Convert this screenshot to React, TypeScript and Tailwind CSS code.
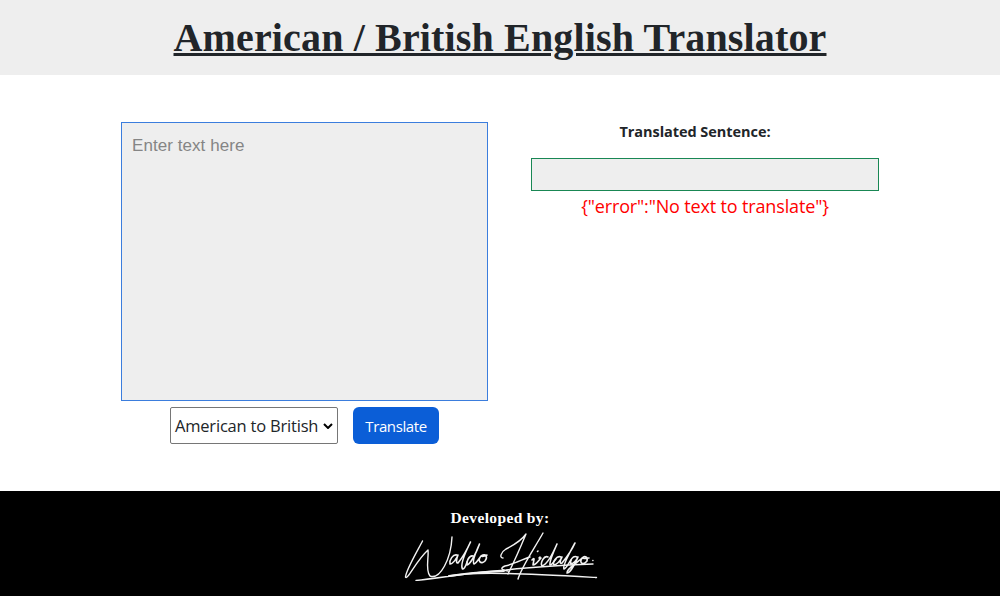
import React from "react";

function Signature() {
  return (
    <svg
      className="block h-[50px] w-[196px]"
      viewBox="402 531 196 50"
      fill="none"
      stroke="#f2f2f2"
      strokeWidth="1.4"
      strokeLinecap="round"
      strokeLinejoin="round"
      role="img"
      aria-label="Waldo Hidalgo"
    >
      <path d="M422.500 541 C418 550 406 570 405.500 577 C407 581 416 561 428 550 C429 557 425 570 430 576 C440 580 451 559 452 537" />
      <path strokeWidth="1.6" d="M457 555 C453 554 449 560 450 564 C453 564 457 558 458 555 C456 560 456 563 458 563 C462 558 467 550 470.500 542 C466 551 460 565 462.500 569 C465 569 466 565 467 562" />
      <path strokeWidth="1.6" d="M473 556 C469 555 466 562 467 565 C471 564 477 551 479.500 544 C475 554 472 562 474 564 C477 563 479 558 481 556 C486 553 488 557 485 561 C481 565 477 561 481 556 C483 557 485 556 487 555" />
      <path d="M503 558 C499 558 501 552 506 549 C514 545 521 541 526 534 C521 546 514 562 508 574 M543 533 C534 549 522 566 518 579 M508 571 C501 570 500 568 505 566 C515 564 525 558 530 557" />
      <path strokeWidth="1.6" d="M540 557 L539 558 M532 560 C536 556 533 562 533 565 C536 565 539 560 541 558 M537.500 551.500 L538 551 M548 557 C544 555 540 563 542 566 C548 564 554 551 557 544 C553 553 549 562 550 565 C552 565 554 561 556 559" />
      <path strokeWidth="1.6" d="M561 557 C557 555 552 562 554 565 C558 564 561 559 562 557 C559 562 560 564 562 563 C566 558 572 550 575 543 C570 552 562 566 564 569 C567 568 569 562 571 560" />
      <path strokeWidth="1.6" d="M577 557 C573 555 569 561 571 564 C574 563 577 559 578 557 C575 564 570 573 567 573 C566 569 576 564 582 558 C585 555 588 557 587 561 C583 566 579 563 582 558 C584 559 587 558 589 558" />
      <path d="M592.800 560.500 L593 560.500" />
      <path d="M416 580.500 C440 578 474 572 506 570 C540 566 566 565 593 564 M449 576 C475 571 530 574 596.500 577.500" />
      <path strokeWidth="1.8" d="M449 576 C468 573 484 572 504 571" />
    </svg>
  );
}

export default function App() {
  return (
    <div className="flex h-[596px] w-full flex-col bg-white font-['Open_Sans','Noto_Sans',sans-serif] text-[#212529]">
      <header className="flex h-[75px] justify-center bg-[#eee]">
        <h1 className="pt-[8px] font-['Liberation_Serif',serif] text-[40px] leading-[60px] font-bold tracking-[0.15px] whitespace-nowrap underline decoration-[3px]">
          American / British English Translator
        </h1>
      </header>
      <main className="flex h-[416px] pt-[47px] pl-[121px]">
        <section className="flex w-[367px] flex-col items-center">
          <textarea
            placeholder="Enter text here"
            className="block h-[279px] w-[367px] resize-none rounded-none border border-[#3b7ddd] bg-[#eee] px-[10px] py-[10px] font-['Liberation_Sans',sans-serif] text-[17px] leading-[25px] tracking-[0.06px] outline-none placeholder:text-[#858585]"
          />
          <div className="mt-[6px] flex gap-[15px]">
            <div className="flex h-[37px] w-[168px] items-center justify-between rounded-[2px] border border-[#767676] pt-px pr-[4px] pl-[4px] text-[16.5px] whitespace-nowrap text-[#212529]">
              <span className="tracking-[-0.2px]">American to British</span>
              <svg className="mb-px h-[6px] w-[10px] shrink-0" viewBox="0 0 10 6" fill="none" stroke="black" strokeWidth="2">
                <path d="M1 1l4 4 4-4" />
              </svg>
            </div>
            <button className="h-[37px] w-[86px] rounded-[6px] bg-[#0b5ed7] pt-px text-[15px] tracking-[-0.4px] text-white">Translate</button>
          </div>
        </section>
        <section className="ml-[43px] flex w-[348px] flex-col items-center">
          <h2 className="mr-[20px] h-[36px] text-[14.5px] leading-[20px] font-bold tracking-[-0.05px] whitespace-nowrap">Translated Sentence:</h2>
          <div className="h-[33px] w-full border border-[#198754] bg-[#eee]" />
          <p className="mt-[1px] text-[18px] leading-[28px] tracking-[-0.15px] whitespace-nowrap text-[#f00]">{'{"error":"No text to translate"}'}</p>
        </section>
      </main>
      <footer className="flex h-[105px] flex-col items-center bg-black text-white">
        <p className="mt-[16px] h-[24px] font-['Liberation_Serif',serif] text-[15.5px] leading-[22px] font-bold tracking-[0.35px]">Developed by:</p>
        <Signature />
      </footer>
    </div>
  );
}
